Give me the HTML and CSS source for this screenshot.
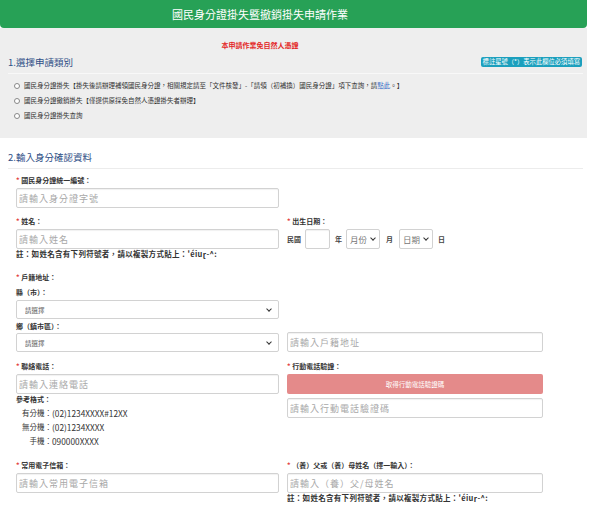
FILE: index.html
```html
<!DOCTYPE html>
<html lang="zh-Hant">
<head>
<meta charset="utf-8">
<title>國民身分證掛失暨撤銷掛失申請作業</title>
<link rel="stylesheet" href="styles.css">
</head>
<body>
<div class="page">
  <header class="header"><h1>國民身分證掛失暨撤銷掛失申請作業</h1></header>

  <section class="sec sec-gray">
    <p class="notice">本申請作業免自然人憑證</p>
    <div class="sec-head sec-head-gray">
      <h2>1.選擇申請類別</h2>
      <span class="badge">標註星號（*）表示此欄位必須填寫</span>
    </div>
    <ul class="radios">
      <li><label><input type="radio" name="type">國民身分證掛失【掛失後請辦理補領國民身分證，相關規定請至「文件核發」-「請領（初補換）國民身分證」項下查詢，請<a href="#">點此</a>。】</label></li>
      <li><label><input type="radio" name="type">國民身分證撤銷掛失【僅提供原採免自然人憑證掛失者辦理】</label></li>
      <li><label><input type="radio" name="type">國民身分證掛失查詢</label></li>
    </ul>
  </section>

  <section class="sec">
    <div class="sec-head">
      <h2>2.輸入身分確認資料</h2>
    </div>

    <div class="row row-1">
      <div class="field">
        <label class="lbl"><span class="req">*</span> 國民身分證統一編號：</label>
        <input class="inp" type="text" placeholder="請輸入身分證字號">
      </div>
      <div></div>
    </div>

    <div class="row row-2">
      <div class="field">
        <label class="lbl"><span class="req">*</span> 姓名：</label>
        <input class="inp" type="text" placeholder="請輸入姓名">
        <p class="note">註：如姓名含有下列符號者，請以複製方式貼上：'éiuɽ-^:</p>
      </div>
      <div class="field">
        <label class="lbl"><span class="req">*</span> 出生日期：</label>
        <div class="date">
          <span class="dtxt">民國</span>
          <input class="inp year" type="text">
          <span class="dtxt">年</span>
          <div class="sel-wrap sel-small"><select class="sel sel-date"><option>月份</option></select></div>
          <span class="dtxt">月</span>
          <div class="sel-wrap sel-small"><select class="sel sel-date"><option>日期</option></select></div>
          <span class="dtxt">日</span>
        </div>
      </div>
    </div>

    <div class="row row-3">
      <div class="field">
        <label class="lbl"><span class="req">*</span> 戶籍地址：</label>
        <label class="sublbl sub-city">縣（市）：</label>
        <div class="sel-wrap"><select class="sel"><option>請選擇</option></select></div>
        <label class="sublbl sub-town">鄉（鎮市區）：</label>
        <div class="sel-wrap"><select class="sel"><option>請選擇</option></select></div>
      </div>
      <div class="field field-end">
        <input class="inp" type="text" placeholder="請輸入戶籍地址">
      </div>
    </div>

    <div class="row row-4">
      <div class="field">
        <label class="lbl"><span class="req">*</span> 聯絡電話：</label>
        <input class="inp" type="text" placeholder="請輸入連絡電話">
        <p class="fmt-title">參考格式：</p>
        <dl class="fmt">
          <dt>有分機：</dt><dd>(02)1234XXXX#12XX</dd>
          <dt>無分機：</dt><dd>(02)1234XXXX</dd>
          <dt>手機：</dt><dd>090000XXXX</dd>
        </dl>
      </div>
      <div class="field">
        <label class="lbl"><span class="req">*</span> 行動電話驗證：</label>
        <button class="btn" type="button">取得行動電話驗證碼</button>
        <input class="inp inp-code" type="text" placeholder="請輸入行動電話驗證碼">
      </div>
    </div>

    <div class="row row-5">
      <div class="field">
        <label class="lbl"><span class="req">*</span> 常用電子信箱：</label>
        <input class="inp" type="text" placeholder="請輸入常用電子信箱">
      </div>
      <div class="field">
        <label class="lbl"><span class="req">*</span> （養）父或（養）母姓名（擇一輸入）：</label>
        <input class="inp" type="text" placeholder="請輸入（養）父/母姓名">
        <p class="note">註：如姓名含有下列符號者，請以複製方式貼上：'éiuɽ-^:</p>
      </div>
    </div>
  </section>
</div>
</body>
</html>
```
FILE: styles.css
```css
* { box-sizing: border-box; }

body {
  margin: 0;
  background: #fff;
  color: #333;
  font-family: "Noto Sans CJK TC", "Noto Sans", "Liberation Sans", sans-serif;
}

.page {
  width: 587px;
}

.header {
  height: 28px;
  background: #27a156;
  border-radius: 0 0 4px 4px;
  padding-right: 67px;
  text-align: center;
}

.header h1 {
  margin: 0;
  color: #fff;
  font-size: 11px;
  font-weight: 400;
  line-height: 28px;
}

.sec-gray {
  background: #eeeeee;
  padding: 12px 0 15px;
}

.notice {
  margin: 0;
  padding-right: 67px;
  text-align: center;
  color: #e32626;
  font-size: 7px;
  font-weight: 700;
  line-height: 10px;
}

.sec-head {
  display: flex;
  justify-content: space-between;
  align-items: center;
  margin: 0 4px 0 8px;
  padding-bottom: 4px;
  border-bottom: 1px solid #ececec;
}

.sec-head-gray {
  margin-top: 5px;
  border-bottom-color: #f8f8f8;
}

.sec-head h2 {
  margin: 0;
  font-size: 9.5px;
  font-weight: 400;
  line-height: 14px;
  color: #2f4f86;
}

.badge {
  background: #1b9fbd;
  color: #fff;
  font-size: 6.3px;
  line-height: 10px;
  padding: 0 2px;
  border-radius: 2px;
  margin-right: 1px;
}

.radios {
  list-style: none;
  margin: 4px 0 0;
  padding: 0 0 0 14px;
}

.radios li {
  font-size: 6.5px;
  line-height: 15px;
  color: #333;
}

.radios label {
  display: flex;
  align-items: center;
}

.radios input {
  appearance: none;
  width: 6px;
  height: 6px;
  margin: 0 4px 0 0;
  border: 1px solid #888;
  border-radius: 50%;
  background: #fff;
  flex: none;
}

.radios a {
  color: #2b62c4;
  text-decoration: none;
}

.sec:not(.sec-gray) {
  padding-top: 12px;
}

.row {
  display: grid;
  grid-template-columns: 263px 256px;
  column-gap: 8px;
  padding-left: 16px;
}

.row-1 { margin-top: 6px; }
.row-2 { margin-top: 8px; }
.row-3 { margin-top: 14px; }
.row-4 { margin-top: 9px; }
.row-5 { margin-top: 12px; }

.field {
  display: flex;
  flex-direction: column;
}

.field-end {
  justify-content: flex-end;
}

.lbl {
  font-size: 7px;
  font-weight: 700;
  line-height: 10px;
  margin-bottom: 3px;
  color: #333;
}

.req {
  color: #e33b3b;
}

.sublbl {
  font-size: 7px;
  font-weight: 700;
  line-height: 10px;
  color: #333;
}

.sub-city { margin-top: 2px; margin-bottom: 3px; }
.sub-town { margin-top: 2px; margin-bottom: 2px; }

.inp {
  display: block;
  width: 100%;
  height: 20px;
  margin: 0;
  padding: 0 2px;
  border: 1px solid #d2d2d2;
  border-radius: 2px;
  background: #fff;
  box-shadow: inset 0 1px 1px rgba(0,0,0,0.06);
  font-family: inherit;
  font-size: 9px;
  letter-spacing: 1px;
  color: #555;
}

.inp::placeholder {
  color: #a8a8a8;
}

.inp-code { margin-top: 4px; }

.note {
  margin: 0;
  font-size: 7.5px;
  letter-spacing: 0.3px;
  font-weight: 700;
  line-height: 9px;
  color: #333;
}

.date {
  display: flex;
  align-items: center;
  height: 20px;
}

.dtxt {
  font-size: 7px;
  font-weight: 700;
  color: #444;
}

.inp.year {
  width: 25px;
  margin: 0 5px 0 4px;
}

.date .dtxt + .sel-wrap { margin-left: 4px; }
.date .sel-wrap + .dtxt { margin-left: 6px; }
.date .dtxt:last-child { margin-left: 5px; }
.date .sel-wrap:nth-of-type(2) { margin-left: 6px; }

.sel-wrap {
  position: relative;
  width: 100%;
}

.sel-wrap::after {
  content: "";
  position: absolute;
  right: 8px;
  top: 50%;
  width: 3px;
  height: 3px;
  margin-top: -3px;
  border-right: 1.3px solid #333;
  border-bottom: 1.3px solid #333;
  transform: rotate(45deg);
  pointer-events: none;
}

.sel-small {
  width: 34px;
}

.sel-small::after {
  right: 5px;
}

.sel {
  display: block;
  width: 100%;
  height: 19px;
  margin: 0;
  padding: 0 0 0 8px;
  appearance: none;
  border: 1px solid #d2d2d2;
  border-radius: 2px;
  background: #fff;
  font-family: inherit;
  font-size: 6.5px;
  color: #555;
}

.sel-date {
  height: 20px;
  padding-left: 3px;
  font-size: 8.5px;
  color: #777;
}

.btn {
  display: block;
  width: 100%;
  height: 20px;
  margin: 0;
  border: none;
  border-radius: 2px;
  background: #e48a8a;
  color: #fff;
  font-family: inherit;
  font-size: 6.5px;
}

.fmt-title {
  margin: 0 0 2px;
  font-size: 7px;
  font-weight: 700;
  line-height: 10px;
}

.fmt {
  display: grid;
  grid-template-columns: 36px auto;
  margin: 0;
  font-size: 7.5px;
  line-height: 14px;
}

.fmt dt {
  text-align: right;
  margin: 0;
}

.fmt dd {
  margin: 0;
  font-size: 8.3px;
}
```
